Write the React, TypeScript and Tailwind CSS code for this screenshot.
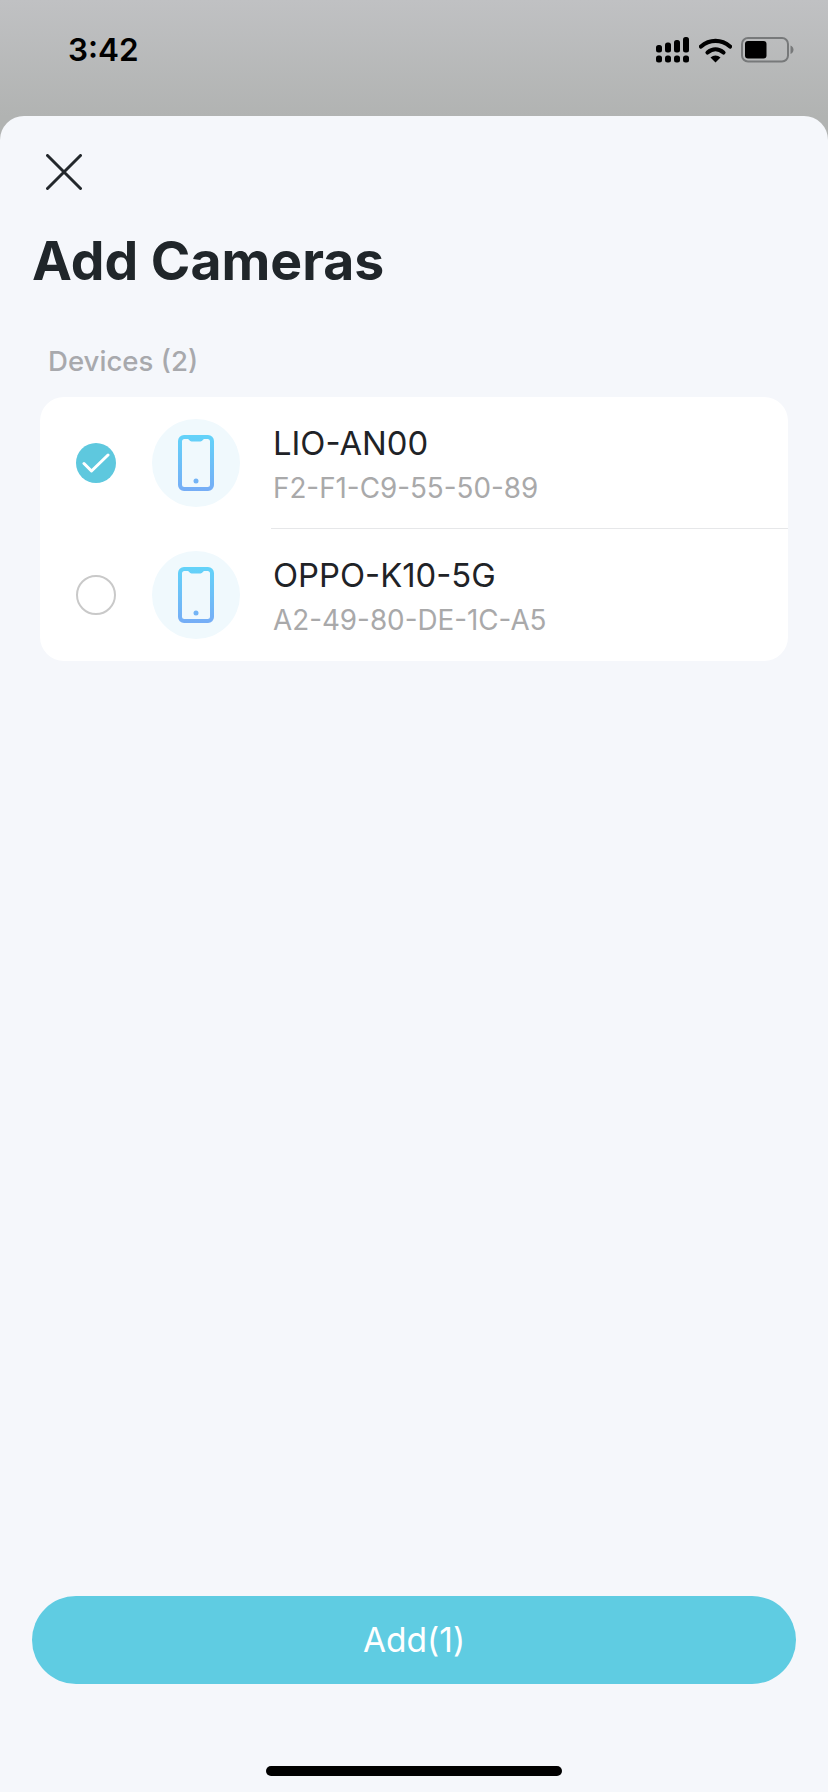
import { useId } from 'react';

const devices = [
  { name: 'LIO-AN00', mac: 'F2-F1-C9-55-50-89', selected: true },
  { name: 'OPPO-K10-5G', mac: 'A2-49-80-DE-1C-A5', selected: false },
];

function StatusIcons() {
  return (
    <div className="flex items-center">
      {/* dual sim signal */}
      <svg width="33" height="26" viewBox="0 0 33 26" fill="#000">
        <rect x="0" y="8" width="6" height="7.5" rx="2.5" />
        <rect x="9" y="5.5" width="6" height="10" rx="2.5" />
        <rect x="18" y="3" width="6" height="12.5" rx="2.5" />
        <rect x="27" y="0" width="6" height="15.5" rx="2.5" />
        <rect x="0" y="18.5" width="6" height="7" rx="2.5" />
        <rect x="9" y="18.5" width="6" height="7" rx="2.5" />
        <rect x="18" y="18.5" width="6" height="7" rx="2.5" />
        <rect x="27" y="18.5" width="6" height="7" rx="2.5" />
      </svg>
      {/* wifi */}
      <svg className="ml-[10px]" width="33" height="25" viewBox="0 0 33 25" fill="none">
        <path d="M2 8.500C10.500 1 22.500 1 31 8.500" stroke="#000" strokeWidth="4.200" strokeLinecap="round" />
        <path d="M8.500 14.500C13.500 10.300 19.500 10.300 24.500 14.500" stroke="#000" strokeWidth="4.200" strokeLinecap="round" />
        <path d="M11.500 19.500C14.500 16.800 18.500 16.800 21.500 19.500L16.500 24.500Z" fill="#000" />
      </svg>
      {/* battery */}
      <svg className="ml-[9px]" width="53" height="26" viewBox="0 0 53 26" fill="none">
        <rect x="1" y="1" width="46" height="23.500" rx="6" stroke="#77797a" strokeWidth="2" />
        <rect x="4" y="4" width="21.500" height="17.500" rx="3" fill="#000" />
        <path d="M49.500 8.500C51.500 9.300 52.500 11 52.500 12.800C52.500 14.600 51.500 16.200 49.500 17Z" fill="#77797a" />
      </svg>
    </div>
  );
}

function PhoneGlyph() {
  const gradientId = useId();
  return (
    <svg width="36" height="56" viewBox="0 0 36 56" fill="none">
      <defs>
        <linearGradient id={gradientId} x1="0" y1="0" x2="0" y2="1">
          <stop offset="0" stopColor="#63d3f9" />
          <stop offset="1" stopColor="#76adf6" />
        </linearGradient>
      </defs>
      <path
        fillRule="evenodd"
        clipRule="evenodd"
        d="M6 0H30A6 6 0 0 1 36 6V50A6 6 0 0 1 30 56H6A6 6 0 0 1 0 50V6A6 6 0 0 1 6 0ZM6.500 4A2.500 2.500 0 0 0 4 6.500V49.500A2.500 2.500 0 0 0 6.500 52H29.500A2.500 2.500 0 0 0 32 49.500V6.500A2.500 2.500 0 0 0 29.500 4H26C25 4 24.500 6.500 22.500 6.500H13.500C11.500 6.500 11 4 10 4Z"
        fill={`url(#${gradientId})`}
      />
      <circle cx="18" cy="46" r="2.500" fill="#73b4f6" />
    </svg>
  );
}

function SelectMark({ selected }: { selected: boolean }) {
  if (!selected) {
    return <div className="h-10 w-10 rounded-full border-2 border-[#c9c9c9]" />;
  }
  return (
    <div className="flex h-10 w-10 items-center justify-center rounded-full bg-[#5ec8de]">
      <svg width="28" height="22" viewBox="0 0 28 22" fill="none">
        <path d="M2 11.500L9.500 19L26 3" stroke="#fff" strokeWidth="3" strokeLinecap="round" strokeLinejoin="round" />
      </svg>
    </div>
  );
}

function DeviceRow({ name, mac, selected, last }: { name: string; mac: string; selected: boolean; last: boolean }) {
  return (
    <div className="flex h-[132px] items-center">
      <div className="ml-9">
        <SelectMark selected={selected} />
      </div>
      <div className="ml-9 flex h-[88px] w-[88px] items-center justify-center rounded-full bg-[#f0f9fd]">
        <PhoneGlyph />
      </div>
      <div className={`ml-[31px] flex h-full flex-1 flex-col ${last ? '' : 'border-b border-[#e6e7e9]'}`}>
        <div className="ml-[2px] mt-[24px] text-[32.800px] leading-[44px] text-[#1f2327]">{name}</div>
        <div className="ml-[2px] mt-[5px] text-[27.800px] leading-[36px] text-[#a9a9aa]">{mac}</div>
      </div>
    </div>
  );
}

export default function App() {
  const selectedCount = devices.filter((d) => d.selected).length;

  return (
    <div className="flex h-[1792px] w-[828px] flex-col overflow-hidden bg-[#b1b3b2] font-['Inter',sans-serif]">
      <div className="flex h-[116px] shrink-0 items-start justify-between bg-gradient-to-b from-[#c0c1c3] to-[#b1b3b2] pl-[68px] pr-[34px] pt-[30px]">
        <span className="text-[31.500px] font-semibold leading-[39px] text-black">3:42</span>
        <div className="pt-[7px]">
          <StatusIcons />
        </div>
      </div>

      <div className="flex flex-1 flex-col rounded-t-[24px] bg-[#f5f7fb]">
        <button className="ml-[46px] mt-[38px] h-9 w-9">
          <svg width="36" height="36" viewBox="0 0 36 36" fill="none">
            <path d="M1.500 1.500L34.500 34.500M34.500 1.500L1.500 34.500" stroke="#23282c" strokeWidth="3" strokeLinecap="round" />
          </svg>
        </button>

        <h1 className="ml-8 mt-[36px] text-[53.500px] font-bold leading-[70px] text-[#20262a]">Add Cameras</h1>

        <div className="ml-12 mt-[47px] text-[27.600px] font-medium leading-[36px] text-[#a8a9ad]">Devices (2)</div>

        <div className="mx-10 mt-[18px] overflow-hidden rounded-[24px] bg-white">
          {devices.map((d, i) => (
            <DeviceRow key={d.mac} {...d} last={i === devices.length - 1} />
          ))}
        </div>

        <div className="flex-1" />

        <button className="mx-8 flex h-[88px] items-center justify-center rounded-full bg-[#5fcce2] pt-[2px] text-[33.500px] leading-none text-white">
          Add({selectedCount})
        </button>

        <div className="mb-4 mt-[82px] h-[10px] w-[296px] self-center rounded-full bg-black" />
      </div>
    </div>
  );
}
